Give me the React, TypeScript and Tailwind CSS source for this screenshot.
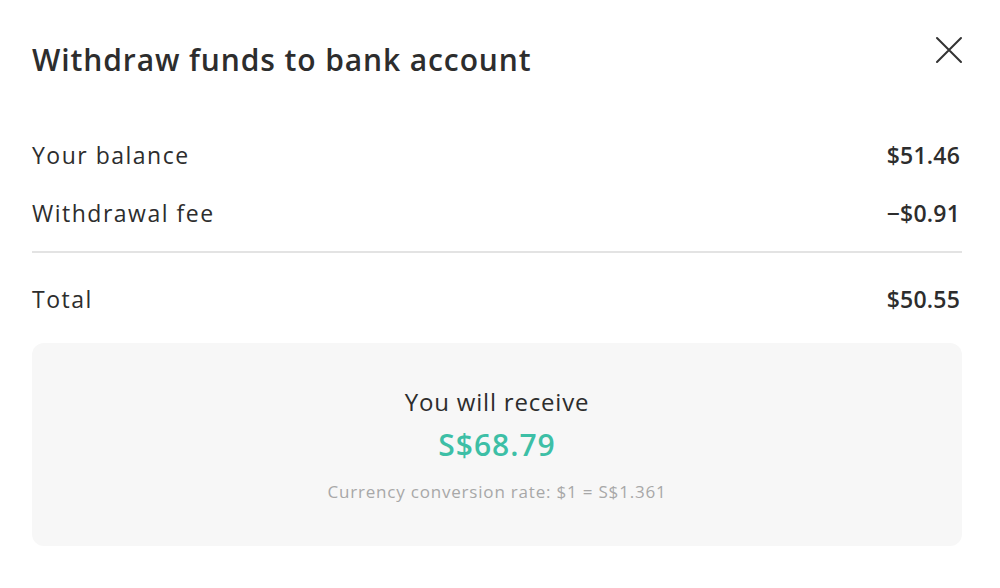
import React from "react";

export default function App() {
  return (
    <div
      className="w-[1000px] h-[588px] bg-white text-[#2d2d2d] overflow-hidden"
      style={{ fontFamily: '"Open Sans", "Liberation Sans", sans-serif' }}
    >
      <div className="pl-[32px] pr-[38px] pt-[30px]">
        <div className="flex items-start justify-between h-[60px]">
          <h1 className="text-[30px] font-semibold leading-[60px] tracking-[0.9px]">
            Withdraw funds to bank account
          </h1>
          <button className="mt-[5px] mr-[-2px] w-[30px] h-[30px] flex items-center justify-center">
            <svg width="30" height="30" viewBox="0 0 30 30" fill="none">
              <path d="M3 3 L27 27 M27 3 L3 27" stroke="#333" strokeWidth="2" strokeLinecap="round" />
            </svg>
          </button>
        </div>

        <div className="mt-[36px] flex flex-col">
          <div className="flex justify-between items-center h-[58px] text-[23px] tracking-[1.5px]">
            <span>Your balance</span>
            <span className="font-semibold pr-[2px] tracking-[0.2px]">$51.46</span>
          </div>
          <div className="flex justify-between items-center h-[58px] text-[23px] tracking-[1.5px]">
            <span>Withdrawal fee</span>
            <span className="font-semibold pr-[2px] tracking-[0.2px]">−$0.91</span>
          </div>
          <div className="h-[2px] bg-[#e3e3e3] mt-[9px]" />
          <div className="flex justify-between items-center h-[58px] mt-[17px] text-[23px] tracking-[1.5px]">
            <span>Total</span>
            <span className="font-semibold pr-[2px] tracking-[0.2px]">$50.55</span>
          </div>
        </div>

        <div className="mt-[15px] h-[203px] rounded-[12px] bg-[#f7f7f7] flex flex-col items-center pt-[42px]">
          <div className="text-[24px] font-medium leading-[34px] tracking-[0.8px]">You will receive</div>
          <div className="text-[30px] font-semibold leading-[42px] text-[#3dbfa6] mt-[5px] tracking-[1px]">S$68.79</div>
          <div className="text-[17px] leading-[24px] text-[#a8a8a8] mt-[14px] tracking-[0.8px]">
            Currency conversion rate: $1 = S$1.361
          </div>
        </div>
      </div>
    </div>
  );
}
